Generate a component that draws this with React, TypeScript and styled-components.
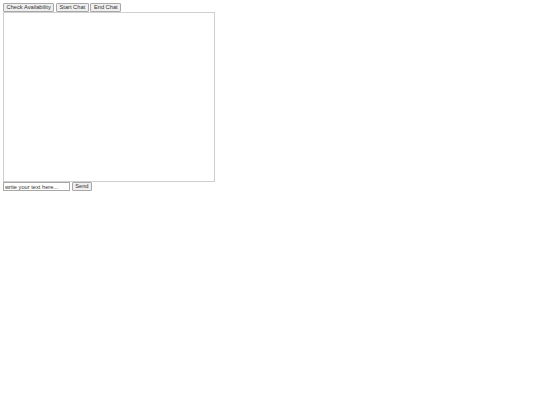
import React from "react";
import styled, { createGlobalStyle } from "styled-components";

const Global = createGlobalStyle`
  html, body { background: #fff; }
  body {
    margin: 3.4px 3px;
    font-family: "Liberation Sans", Arial, sans-serif;
  }
`;

const Toolbar = styled.div`
  display: flex;
  gap: 1.6px;
  height: 9px;
`;

const Button = styled.button`
  appearance: none;
  box-sizing: border-box;
  height: 9px;
  margin: 0;
  padding: 0 2.6px;
  font-family: "Liberation Sans", Arial, sans-serif;
  font-size: 5.7px;
  line-height: 7px;
  color: #333;
  background: #efefef;
  border: 0.8px solid #a8a8a8;
  border-radius: 1px;
  white-space: nowrap;
`;

const ChatBox = styled.div`
  box-sizing: border-box;
  width: 212px;
  height: 170px;
  border: 0.9px solid #cfcfcf;
  overflow: auto;
`;

const InputRow = styled.div`
  display: flex;
  gap: 1.6px;
  align-items: stretch;
  height: 9px;
`;

const TextInput = styled.input`
  box-sizing: border-box;
  width: 67px;
  height: 9px;
  margin: 0;
  padding: 0 1px;
  font-family: "Liberation Sans", Arial, sans-serif;
  font-size: 5.7px;
  color: #333;
  border: 0.8px solid #a8a8a8;
  outline: none;
  background: #fff;
`;

export default function App() {
  return (
    <>
      <Global />
      <Toolbar>
        <Button>Check Availability</Button>
        <Button>Start Chat</Button>
        <Button>End Chat</Button>
      </Toolbar>
      <ChatBox />
      <InputRow>
        <TextInput defaultValue="write your text here..." />
        <Button>Send</Button>
      </InputRow>
    </>
  );
}
